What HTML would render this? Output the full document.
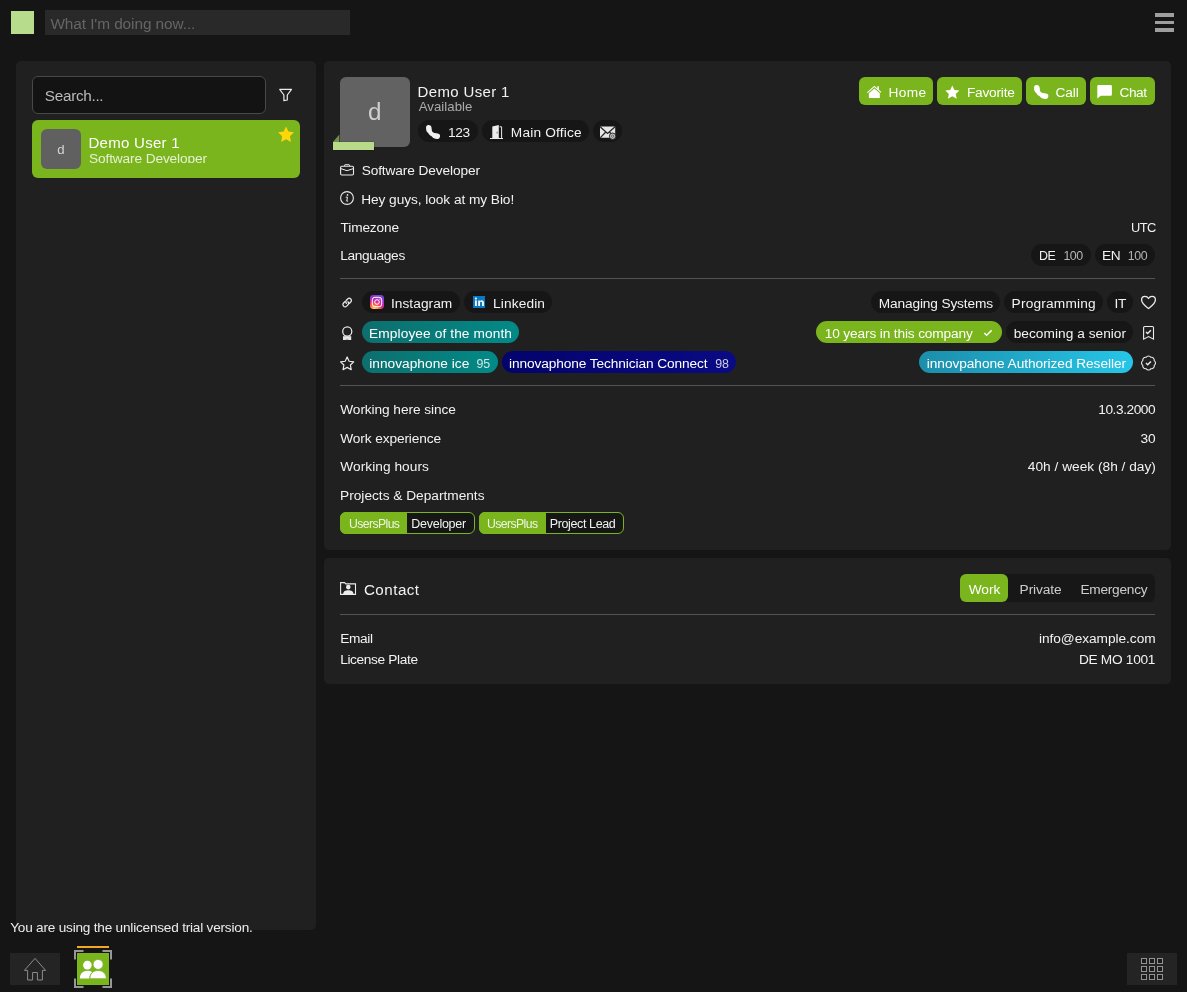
<!DOCTYPE html>
<html>
<head>
<meta charset="utf-8">
<title>Users</title>
<style>
html,body{margin:0;padding:0;}
body{width:1187px;height:992px;background:#151515;position:relative;overflow:hidden;font-family:"Liberation Sans",sans-serif;color:#f2f2f2;font-size:13.7px;}
.a{position:absolute;}
.t{position:absolute;white-space:nowrap;line-height:20px;height:20px;}
.panel{position:absolute;background:#202020;border-radius:5px;}
.chip{position:absolute;background:#161616;border-radius:11px;height:22px;}
.btn{position:absolute;background:#7ab51d;border-radius:6px;height:28px;top:77px;}
.hr{position:absolute;height:1px;background:#535353;left:340px;width:815px;}
svg{position:absolute;left:0;top:0;overflow:visible;}
#tx{position:absolute;left:0;top:0;width:1187px;height:992px;will-change:transform;}
</style>
</head>
<body>
<!-- top bar -->
<div class="a" style="left:11px;top:11px;width:23px;height:23px;background:#b7dc8c;"></div>
<div class="a" style="left:45px;top:10px;width:305px;height:25px;background:#292929;"></div>
<div class="a" style="left:1155px;top:13px;width:19px;height:4px;background:#9e9e9e;"></div>
<div class="a" style="left:1155px;top:21px;width:19px;height:3px;background:#9e9e9e;"></div>
<div class="a" style="left:1155px;top:28px;width:19px;height:4px;background:#9e9e9e;"></div>

<!-- left panel -->
<div class="panel" style="left:16px;top:61px;width:300px;height:869px;"></div>
<div class="a" style="left:32px;top:76px;width:232px;height:36px;background:#131313;border:1px solid #484848;border-radius:6px;"></div>
<div class="a" style="left:32px;top:120px;width:268px;height:58px;background:#7ab51d;border-radius:6px;"></div>
<div class="a" style="left:41px;top:129px;width:40px;height:40px;background:#606060;border-radius:6px;"></div>

<!-- main panel -->
<div class="panel" style="left:324px;top:61px;width:847px;height:489px;"></div>
<div class="a" style="left:340px;top:77px;width:70px;height:70px;background:#626262;border-radius:6px;"></div>
<div class="a" style="left:333px;top:142px;width:41px;height:8px;background:#b9db89;box-shadow:0 0 1px rgba(0,0,0,.6);"></div>

<div class="chip" style="left:418px;top:120px;width:60px;"></div>
<div class="chip" style="left:482px;top:120px;width:107px;"></div>
<div class="chip" style="left:593px;top:120px;width:29px;"></div>

<div class="btn" style="left:859px;width:74px;"></div>
<div class="btn" style="left:937px;width:85px;"></div>
<div class="btn" style="left:1026px;width:60px;"></div>
<div class="btn" style="left:1090px;width:65px;"></div>

<div class="chip" style="left:1031px;top:244px;width:60px;"></div>
<div class="chip" style="left:1095px;top:244px;width:60px;"></div>
<div class="hr" style="top:278px;"></div>

<div class="chip" style="left:362px;top:291px;width:98px;"></div>
<div class="chip" style="left:464px;top:291px;width:88px;"></div>
<div class="chip" style="left:871px;top:291px;width:129px;"></div>
<div class="chip" style="left:1004px;top:291px;width:99px;"></div>
<div class="chip" style="left:1107px;top:291px;width:26px;"></div>

<div class="chip" style="left:362px;top:321px;width:157px;background:linear-gradient(90deg,#0d6f6e,#028a87);"></div>
<div class="chip" style="left:816px;top:321px;width:186px;background:#7ab51d;"></div>
<div class="chip" style="left:1006px;top:321px;width:127px;"></div>

<div class="chip" style="left:362px;top:351px;width:136px;background:linear-gradient(90deg,#0d6f6e,#028a87);"></div>
<div class="chip" style="left:502px;top:351px;width:234px;background:linear-gradient(90deg,#03036c,#0a0a84);"></div>
<div class="chip" style="left:919px;top:351px;width:214px;background:linear-gradient(90deg,#1c8eab,#26c6e8);"></div>
<div class="hr" style="top:385px;"></div>

<div class="a" style="left:340px;top:512px;width:133px;height:20px;background:#161616;border:1px solid #7ab51d;border-radius:6px;"></div>
<div class="a" style="left:340px;top:512px;width:67px;height:22px;background:#7ab51d;border-radius:6px 0 0 6px;"></div>
<div class="a" style="left:479px;top:512px;width:143px;height:20px;background:#161616;border:1px solid #7ab51d;border-radius:6px;"></div>
<div class="a" style="left:479px;top:512px;width:67px;height:22px;background:#7ab51d;border-radius:6px 0 0 6px;"></div>

<!-- contact panel -->
<div class="panel" style="left:324px;top:558px;width:847px;height:126px;"></div>
<div class="a" style="left:960px;top:574px;width:195px;height:28px;background:#171717;border-radius:6px;"></div>
<div class="a" style="left:960px;top:574px;width:48px;height:28px;background:#7ab51d;border-radius:6px;"></div>
<div class="hr" style="top:614px;"></div>

<!-- bottom -->
<div class="a" style="left:10px;top:953px;width:50px;height:32px;background:#242424;"></div>
<div class="a" style="left:77px;top:946px;width:32px;height:2px;background:#f5a623;"></div>
<div class="a" style="left:77px;top:953px;width:32px;height:32px;background:#7ab51d;"></div>
<div class="a" style="left:1127px;top:953px;width:50px;height:32px;background:#242424;"></div>

<svg width="1187" height="992" viewBox="0 0 1187 992">
<defs>
<radialGradient id="ig" cx="0.3" cy="1.07" r="1.1">
<stop offset="0" stop-color="#fdf497"/><stop offset="0.08" stop-color="#fdd85a"/><stop offset="0.38" stop-color="#fd5949"/><stop offset="0.58" stop-color="#d6249f"/><stop offset="0.95" stop-color="#7a42d8"/>
</radialGradient>
<g id="ph" fill="none" stroke-linecap="round"><path d="M2.8 2.8 Q3 9.8 11.2 11.25" stroke-width="4.2"/><path d="M2.8 2.75 L2.95 4.9" stroke-width="5.5"/><path d="M9.1 10.85 L11.3 11.3" stroke-width="5.5"/></g>
<path id="star" d="M8 0.4 L10.3 5.3 L15.7 6 L11.8 9.7 L12.8 15 L8 12.4 L3.2 15 L4.2 9.7 L0.3 6 L5.7 5.3 Z"/>
</defs>

<!-- filter -->
<path d="M279.7 89.4 H291.5 L287.3 95 V100 L283.9 100.6 V95 Z" fill="none" stroke="#ececec" stroke-width="1.2" stroke-linejoin="round"/>
<!-- fav star (list) -->
<use href="#star" transform="translate(277.8,126) scale(1.03,1.06)" fill="#ffd60a"/>

<!-- presence fold -->
<path d="M333 142 L339.3 134.5 V142 Z" fill="#728c52"/>

<!-- phone chip -->
<use href="#ph" transform="translate(426,125)" stroke="#f0f0f0"/>
<!-- door -->
<path d="M492.3 126.6 L498.8 125 V138.3 H492.3 Z" fill="#ececec"/>
<path d="M499.6 126.8 H501.6 V138.3" fill="none" stroke="#ececec" stroke-width="1"/>
<rect x="490" y="138" width="13" height="1" fill="#ececec"/>
<rect x="496.6" y="131.8" width="1.1" height="1.6" fill="#777"/>
<!-- mail -->
<rect x="600" y="126.4" width="15.2" height="11.4" rx="1.2" fill="#e6e6e6"/>
<path d="M600.4 127 L607.6 133.4 L614.8 127 M600.4 137.6 L605.8 132 M614.8 137.6 L609.4 132" fill="none" stroke="#242424" stroke-width="1.25"/>
<circle cx="612.6" cy="136.2" r="3.2" fill="#c4c4c4" stroke="#1c1c1c" stroke-width="0.9"/>
<circle cx="612.6" cy="136.2" r="1.2" fill="none" stroke="#4a4a4a" stroke-width="0.7"/>

<!-- Home btn icon -->
<path d="M867.4 92.6 L874.4 86.4 L881 92.4" fill="none" stroke="#fff" stroke-width="1.15" stroke-linejoin="miter"/>
<path d="M868.9 98.1 V93.2 L874.4 88.4 L879.8 93.2 V98.1 Z" fill="#fff"/>
<rect x="877.4" y="86.2" width="1.5" height="3.6" fill="#fff"/>
<!-- Favorite star -->
<use href="#star" transform="translate(945,85.2) scale(0.915,0.9)" fill="#fff"/>
<!-- Call -->
<use href="#ph" transform="translate(1034,85) scale(1.02,1.0)" stroke="#fff"/>
<!-- Chat -->
<path d="M1098.6 85 H1110.6 A1.3 1.3 0 0 1 1111.9 86.3 V94.4 A1.3 1.3 0 0 1 1110.6 95.7 H1100.8 L1097.3 98.6 V86.3 A1.3 1.3 0 0 1 1098.6 85 Z" fill="#fff"/>

<!-- briefcase -->
<rect x="340.6" y="166.2" width="12.9" height="8.8" rx="1.2" fill="none" stroke="#ececec" stroke-width="1.1"/>
<path d="M344.6 166 V165.2 Q344.6 164.7 345.2 164.7 H348.9 Q349.5 164.7 349.5 165.2 V166" fill="none" stroke="#ececec" stroke-width="1"/>
<path d="M340.8 168.6 L347.05 170.7 L353.3 168.6" fill="none" stroke="#ececec" stroke-width="1"/>
<!-- info -->
<circle cx="347" cy="198" r="6.4" fill="none" stroke="#ececec" stroke-width="1.1"/>
<circle cx="347.5" cy="194.9" r="0.85" fill="#ececec"/>
<path d="M345.7 197.2 H347.5 L346.7 201.1 H348.1" fill="none" stroke="#ececec" stroke-width="1"/>
<!-- link -->
<g fill="none" stroke="#e8e8e8" stroke-width="1.3" stroke-linecap="round" transform="translate(347.15,302.55) rotate(-45)">
<path d="M-1.1 -2.2 L-2.9 -2.2 A2.2 2.2 0 0 0 -2.9 2.2 L-1.1 2.2 A2.2 2.2 0 0 0 1.1 0"/>
<path d="M1.1 2.2 L2.9 2.2 A2.2 2.2 0 0 0 2.9 -2.2 L1.1 -2.2 A2.2 2.2 0 0 0 -1.1 0"/>
</g>
<!-- instagram -->
<rect x="370" y="295" width="14" height="14" rx="3.4" fill="url(#ig)"/>
<rect x="372.3" y="297.3" width="9.4" height="9.4" rx="2.6" fill="none" stroke="#fff" stroke-width="1"/>
<circle cx="377" cy="302" r="2.3" fill="none" stroke="#fff" stroke-width="1"/>
<circle cx="379.9" cy="299.1" r="0.6" fill="#fff"/>
<!-- linkedin -->
<rect x="473" y="296" width="12" height="12" fill="#0a7ac0"/>
<rect x="475" y="300.4" width="1.8" height="5.6" fill="#fff"/>
<circle cx="475.9" cy="298.6" r="1.05" fill="#fff"/>
<path d="M478.2 306 V300.4 H479.9 V301.2 C480.3 300.6 481 300.2 481.8 300.2 C483.2 300.2 483.9 301.1 483.9 302.6 V306 H482.1 V303 C482.1 302.2 481.8 301.8 481.1 301.8 C480.4 301.8 480 302.3 480 303 V306 Z" fill="#fff"/>
<!-- heart -->
<path d="M1148.5 308.5 C1146 306.5 1141.6 303.4 1141.6 299.9 C1141.6 297.8 1143.2 296.4 1145 296.4 C1146.4 296.4 1147.7 297.2 1148.5 298.5 C1149.3 297.2 1150.6 296.4 1152 296.4 C1153.8 296.4 1155.4 297.8 1155.4 299.9 C1155.4 303.4 1151 306.5 1148.5 308.5 Z" fill="none" stroke="#ececec" stroke-width="1.3" stroke-linejoin="round"/>

<!-- award -->
<circle cx="347.25" cy="331.5" r="4.55" fill="none" stroke="#ececec" stroke-width="1.25"/>
<path d="M343 336.2 H351.2 V340 H343 Z" fill="#e6e6e6"/>
<path d="M345.3 340 L347.1 338.3 L348.9 340 Z" fill="#b0b0b0"/>
<!-- 10y check -->
<path d="M984.3 333 L986.6 335.3 L991.6 330.4" fill="none" stroke="#fff" stroke-width="1.5"/>
<!-- bookmark -->
<path d="M1143.6 339.2 V327.6 Q1143.6 326.5 1144.7 326.5 H1152.4 Q1153.5 326.5 1153.5 327.6 V339.2 L1148.55 336.6 Z" fill="none" stroke="#ececec" stroke-width="1.1" stroke-linejoin="miter"/>
<path d="M1146 332 L1147.6 333.6 L1150.9 330.3" fill="none" stroke="#ececec" stroke-width="1.4"/>

<!-- star outline -->
<use href="#star" transform="translate(340.3,356.6) scale(0.855,0.87)" fill="none" stroke="#ececec" stroke-width="1.35" stroke-linejoin="round"/>
<!-- check badge -->
<path d="M1150.87 357.27 A2.85 2.85 0 0 1 1154.23 360.63 A2.85 2.85 0 0 1 1154.23 365.37 A2.85 2.85 0 0 1 1150.87 368.73 A2.85 2.85 0 0 1 1146.13 368.73 A2.85 2.85 0 0 1 1142.77 365.37 A2.85 2.85 0 0 1 1142.77 360.63 A2.85 2.85 0 0 1 1146.13 357.27 A2.85 2.85 0 0 1 1150.87 357.27 Z" fill="none" stroke="#ececec" stroke-width="1.1"/>
<path d="M1146 363.1 L1147.7 364.8 L1150.9 361.4" fill="none" stroke="#ececec" stroke-width="1.4"/>

<!-- contact -->
<path d="M340.6 582.6 H344.6 L345.8 583.9 H355.5 V594.4 H340.6 Z" fill="none" stroke="#ececec" stroke-width="1.1" stroke-linejoin="miter"/>
<circle cx="348.3" cy="587.1" r="2.3" fill="#ececec"/>
<path d="M343.2 594.2 C343.2 591 345.5 590.3 348.3 590.3 C351.1 590.3 353.4 591 353.4 594.2 Z" fill="#ececec"/>

<!-- bottom home -->
<path d="M24.4 970.4 L35 958.4 L45.6 970.4 H42.4 V980 H37.4 V972.5 H32.6 V980 H27.6 V970.4 Z" fill="none" stroke="#8c8c8c" stroke-width="1" stroke-linejoin="miter"/>
<!-- users app brackets -->
<g fill="#979797">
<path d="M74 950 H83.5 V952 H76 V959.5 H74 Z"/>
<path d="M112 950 H102.5 V952 H110 V959.5 H112 Z"/>
<path d="M74 988 H83.5 V986 H76 V978.5 H74 Z"/>
<path d="M112 988 H102.5 V986 H110 V978.5 H112 Z"/>
</g>
<!-- users glyph -->
<circle cx="87.4" cy="965.1" r="4.3" fill="#fff"/>
<path d="M79.9 978.4 C79.9 973.6 83 970.8 87.4 970.8 C89.3 970.8 90.9 971.3 92.1 972.2 C90.4 973.7 89.4 975.9 89.3 978.4 Z" fill="#fff"/>
<circle cx="98.1" cy="964.4" r="5" fill="#fff" stroke="#7ab51d" stroke-width="0.8"/>
<path d="M89.9 978.7 C89.9 973.6 93.3 970.5 98.1 970.5 C102.9 970.5 106.3 973.6 106.3 978.7 Z" fill="#fff" stroke="#7ab51d" stroke-width="0.8"/>
<!-- grid -->
<g fill="#1b1b1b" stroke="#929292" stroke-width="1">
<rect x="1141.5" y="958.5" width="5" height="5"/><rect x="1149.5" y="958.5" width="5" height="5"/><rect x="1157.5" y="958.5" width="5" height="5"/>
<rect x="1141.5" y="966.5" width="5" height="5"/><rect x="1149.5" y="966.5" width="5" height="5"/><rect x="1157.5" y="966.5" width="5" height="5"/>
<rect x="1141.5" y="974.5" width="5" height="5"/><rect x="1149.5" y="974.5" width="5" height="5"/><rect x="1157.5" y="974.5" width="5" height="5"/>
</g>
</svg>


<div id="tx">
<div class="t" style="left:50.40px;top:14px;font-size:15.4px;color:#656565;letter-spacing:-0.085px;">What I'm doing now...</div>
<div class="t" style="left:44.85px;top:86px;font-size:15.3px;color:#bababa;letter-spacing:-0.312px;">Search...</div>
<div class="t" style="left:57.23px;top:140px;font-size:13.2px;color:#d4d4d4;">d</div>
<div class="t" style="left:88.45px;top:133px;font-size:15.0px;color:#ffffff;letter-spacing:0.285px;">Demo User 1</div>
<div class="t" style="left:89.05px;top:149px;font-size:13.7px;color:#e6f1d3;letter-spacing:-0.132px;height:14.00px;overflow:hidden;">Software Developer</div>
<div class="t" style="left:368.00px;top:102px;font-size:24.2px;color:#cfcfcf;">d</div>
<div class="t" style="left:417.55px;top:82px;font-size:15.0px;color:#f2f2f2;letter-spacing:0.345px;">Demo User 1</div>
<div class="t" style="left:418.75px;top:97px;font-size:13.2px;color:#ababab;letter-spacing:0.037px;">Available</div>
<div class="t" style="left:448.05px;top:123px;font-size:13.7px;color:#f2f2f2;letter-spacing:-0.350px;">123</div>
<div class="t" style="left:510.80px;top:123px;font-size:13.7px;color:#f2f2f2;letter-spacing:0.180px;">Main Office</div>
<div class="t" style="left:888.60px;top:83px;font-size:13.7px;color:#fff;letter-spacing:0.317px;">Home</div>
<div class="t" style="left:966.90px;top:83px;font-size:13.7px;color:#fff;letter-spacing:-0.207px;">Favorite</div>
<div class="t" style="left:1055.60px;top:83px;font-size:13.7px;color:#fff;letter-spacing:-0.167px;">Call</div>
<div class="t" style="left:1119.40px;top:83px;font-size:13.7px;color:#fff;letter-spacing:-0.383px;">Chat</div>
<div class="t" style="left:361.65px;top:161px;font-size:13.7px;color:#f2f2f2;letter-spacing:-0.109px;">Software Developer</div>
<div class="t" style="left:361.20px;top:190px;font-size:13.7px;color:#f2f2f2;letter-spacing:-0.058px;">Hey guys, look at my Bio!</div>
<div class="t" style="left:340.60px;top:218px;font-size:13.7px;color:#f2f2f2;letter-spacing:-0.164px;">Timezone</div>
<div class="t" style="left:1130.51px;top:218px;font-size:13.7px;color:#f2f2f2;letter-spacing:-0.600px;transform:scaleX(0.9389);transform-origin:0 0;">UTC</div>
<div class="t" style="left:340.20px;top:246px;font-size:13.7px;color:#f2f2f2;letter-spacing:-0.338px;">Languages</div>
<div class="t" style="left:1038.90px;top:246px;font-size:13.7px;color:#f2f2f2;letter-spacing:-0.600px;transform:scaleX(0.9075);transform-origin:0 0;">DE</div>
<div class="t" style="left:1063.55px;top:246px;font-size:12.4px;color:#b6b6b6;letter-spacing:-0.600px;">100</div>
<div class="t" style="left:1102.00px;top:246px;font-size:13.7px;color:#f2f2f2;letter-spacing:-0.450px;">EN</div>
<div class="t" style="left:1127.75px;top:246px;font-size:12.4px;color:#b6b6b6;letter-spacing:-0.425px;">100</div>
<div class="t" style="left:390.95px;top:294px;font-size:13.7px;color:#f2f2f2;letter-spacing:0.056px;">Instagram</div>
<div class="t" style="left:493.10px;top:294px;font-size:13.7px;color:#f2f2f2;letter-spacing:0.121px;">Linkedin</div>
<div class="t" style="left:878.80px;top:294px;font-size:13.7px;color:#f2f2f2;letter-spacing:-0.147px;">Managing Systems</div>
<div class="t" style="left:1011.60px;top:294px;font-size:13.7px;color:#f2f2f2;letter-spacing:0.195px;">Programming</div>
<div class="t" style="left:1114.45px;top:294px;font-size:13.7px;color:#f2f2f2;letter-spacing:-0.200px;">IT</div>
<div class="t" style="left:369.10px;top:324px;font-size:13.7px;color:#fff;letter-spacing:0.105px;">Employee of the month</div>
<div class="t" style="left:824.75px;top:324px;font-size:13.7px;color:#fff;letter-spacing:-0.146px;">10 years in this company</div>
<div class="t" style="left:1013.70px;top:324px;font-size:13.7px;color:#f2f2f2;letter-spacing:0.034px;">becoming a senior</div>
<div class="t" style="left:369.30px;top:354px;font-size:13.7px;color:#fff;letter-spacing:0.018px;">innovaphone ice</div>
<div class="t" style="left:476.50px;top:354px;font-size:12.4px;color:#cfe6e5;letter-spacing:-0.250px;">95</div>
<div class="t" style="left:509.10px;top:354px;font-size:13.7px;color:#fff;letter-spacing:-0.103px;">innovaphone Technician Connect</div>
<div class="t" style="left:715.30px;top:354px;font-size:12.4px;color:#cfcfe6;letter-spacing:-0.150px;">98</div>
<div class="t" style="left:926.80px;top:354px;font-size:13.7px;color:#fff;letter-spacing:-0.055px;">innovpahone Authorized Reseller</div>
<div class="t" style="left:340.25px;top:400px;font-size:13.7px;color:#f2f2f2;letter-spacing:-0.079px;">Working here since</div>
<div class="t" style="left:1098.25px;top:400px;font-size:13.7px;color:#f2f2f2;letter-spacing:-0.437px;">10.3.2000</div>
<div class="t" style="left:340.25px;top:429px;font-size:13.7px;color:#f2f2f2;letter-spacing:-0.114px;">Work experience</div>
<div class="t" style="left:1140.45px;top:429px;font-size:13.7px;color:#f2f2f2;letter-spacing:0.050px;">30</div>
<div class="t" style="left:340.25px;top:457px;font-size:13.7px;color:#f2f2f2;letter-spacing:0.054px;">Working hours</div>
<div class="t" style="left:1027.80px;top:457px;font-size:13.7px;color:#f2f2f2;letter-spacing:0.015px;">40h / week (8h / day)</div>
<div class="t" style="left:340.10px;top:486px;font-size:13.7px;color:#f2f2f2;letter-spacing:-0.007px;">Projects &amp; Departments</div>
<div class="t" style="left:349.17px;top:514px;font-size:12.5px;color:#eef6e0;letter-spacing:-0.600px;transform:scaleX(0.9773);transform-origin:0 0;">UsersPlus</div>
<div class="t" style="left:411.25px;top:514px;font-size:12.5px;color:#f2f2f2;letter-spacing:-0.262px;">Developer</div>
<div class="t" style="left:487.27px;top:514px;font-size:12.5px;color:#eef6e0;letter-spacing:-0.600px;transform:scaleX(0.9793);transform-origin:0 0;">UsersPlus</div>
<div class="t" style="left:549.75px;top:514px;font-size:12.5px;color:#f2f2f2;letter-spacing:-0.377px;">Project Lead</div>
<div class="t" style="left:363.95px;top:580px;font-size:15.2px;color:#f2f2f2;letter-spacing:0.467px;">Contact</div>
<div class="t" style="left:968.75px;top:580px;font-size:13.7px;color:#fff;letter-spacing:-0.050px;">Work</div>
<div class="t" style="left:1019.60px;top:580px;font-size:13.7px;color:#cdcdcd;letter-spacing:-0.083px;">Private</div>
<div class="t" style="left:1080.40px;top:580px;font-size:13.7px;color:#cdcdcd;letter-spacing:-0.244px;">Emergency</div>
<div class="t" style="left:340.20px;top:629px;font-size:13.7px;color:#f2f2f2;letter-spacing:-0.338px;">Email</div>
<div class="t" style="left:1038.90px;top:629px;font-size:13.7px;color:#f2f2f2;letter-spacing:-0.043px;">info@example.com</div>
<div class="t" style="left:340.20px;top:650px;font-size:13.7px;color:#f2f2f2;letter-spacing:-0.363px;">License Plate</div>
<div class="t" style="left:1078.90px;top:650px;font-size:13.7px;color:#f2f2f2;letter-spacing:-0.289px;">DE MO 1001</div>
<div class="t" style="left:10.20px;top:918px;font-size:13.6px;color:#ececec;letter-spacing:-0.204px;">You are using the unlicensed trial version.</div>
</div>
</body>
</html>
